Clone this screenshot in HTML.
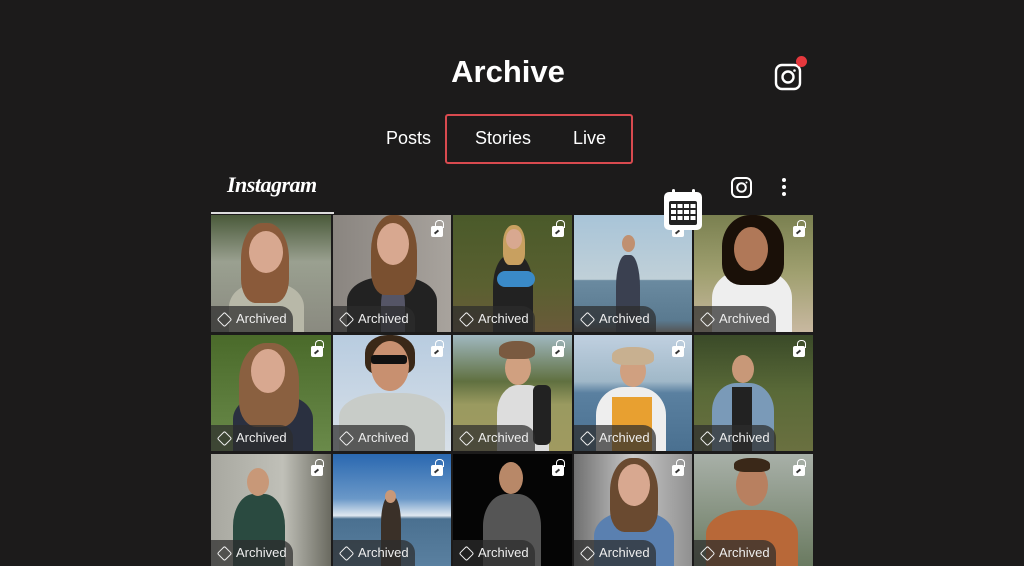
<!DOCTYPE html>
<html><head><meta charset="utf-8"><style>
*{margin:0;padding:0;box-sizing:border-box}
body{width:1024px;height:559px;background:#1c1b1b;overflow:hidden;position:relative;font-family:"Liberation Sans",sans-serif;color:#fff}
.abs{position:absolute}
.cell{position:absolute;overflow:hidden}
.head{position:absolute;border-radius:50%}
.hair{position:absolute;border-radius:45% 45% 30% 30%}
.body{position:absolute;border-radius:40% 40% 0 0}
.pill{position:absolute;left:0;bottom:0;height:26px;width:82px;background:rgba(45,45,45,.72);border-radius:0 13px 0 0;font-size:13px;line-height:26px;padding-left:25px;color:#eee}
.pill:before{content:"";position:absolute;left:8px;top:8px;width:9px;height:9px;border:1.6px solid #eee;transform:rotate(45deg);border-radius:2px}
.lock{position:absolute;right:8px;top:11px;width:12px;height:11px;background:#fff;border-radius:2px}
.lock:before{content:"";position:absolute;left:4px;top:-6px;width:7px;height:7px;border:1.6px solid #fff;border-bottom:none;border-radius:4px 4px 0 0}
.lock:after{content:"";position:absolute;left:3px;top:5px;width:5px;height:2px;background:#333;transform:rotate(-40deg)}
</style></head><body>
<div class="abs" style="left:0;width:1016px;top:54px;text-align:center;font-size:31px;font-weight:bold">Archive</div>
<svg class="abs" style="left:774px;top:62px" width="30" height="30" viewBox="0 0 30 30"><rect x="2" y="3" width="24" height="24" rx="6" fill="none" stroke="#fff" stroke-width="2.4"/><circle cx="14" cy="15" r="5.5" fill="none" stroke="#fff" stroke-width="2.4"/><circle cx="20.5" cy="8.5" r="1.3" fill="#fff"/></svg>
<div class="abs" style="left:796px;top:56px;width:11px;height:11px;border-radius:50%;background:#e5383d"></div>
<div class="abs" style="left:386px;top:128px;font-size:18px">Posts</div>
<div class="abs" style="left:475px;top:128px;font-size:18px">Stories</div>
<div class="abs" style="left:573px;top:128px;font-size:18px">Live</div>
<div class="abs" style="left:445px;top:114px;width:188px;height:50px;border:2px solid #d94a4f;border-radius:3px"></div>
<div class="abs" style="left:227px;top:172px;font-family:'Liberation Serif',serif;font-style:italic;font-weight:bold;font-size:22px;letter-spacing:-0.5px">Instagram</div>
<div class="abs" style="left:211px;top:212px;width:123px;height:2px;background:#ddd"></div>
<svg class="abs" style="left:730px;top:176px" width="24" height="24" viewBox="0 0 24 24"><rect x="2" y="2" width="19" height="19" rx="5" fill="none" stroke="#fff" stroke-width="2"/><circle cx="11.5" cy="11.5" r="4.3" fill="none" stroke="#fff" stroke-width="2"/><circle cx="16.5" cy="6.5" r="1" fill="#fff"/></svg>
<div class="abs" style="left:782px;top:178px;width:4px;height:4px;border-radius:50%;background:#fff;box-shadow:0 7px 0 #fff,0 14px 0 #fff"></div>

<div class="cell" style="left:211px;top:215px;width:120px;height:117px;background:linear-gradient(#4a5a3a,#9aa090 40%,#8a8a80)"><div class="body" style="left:18px;top:68px;width:75px;height:60px;background:#b8b8a8"></div><div class="hair" style="left:30px;top:8px;width:48px;height:80px;background:#8a5a3a"></div><div class="head" style="left:38px;top:16px;width:34px;height:42px;background:#d8a890"></div><div class="pill">Archived</div></div>
<div class="cell" style="left:333px;top:215px;width:118px;height:117px;background:linear-gradient(90deg,#8a8580,#a8a39d)"><div class="body" style="left:14px;top:62px;width:90px;height:60px;background:#222"></div><div class="body" style="left:48px;top:66px;width:24px;height:60px;background:#556"></div><div class="hair" style="left:38px;top:0;width:46px;height:80px;background:#7a5030"></div><div class="head" style="left:44px;top:8px;width:32px;height:42px;background:#d8a890"></div><div class="lock"></div><div class="pill">Archived</div></div>
<div class="cell" style="left:453px;top:215px;width:119px;height:117px;background:linear-gradient(#4a5a2a,#5a6030 60%,#6a5a3a)"><div class="body" style="left:40px;top:40px;width:40px;height:80px;background:#222"></div><div class="abs" style="left:44px;top:56px;width:38px;height:16px;border-radius:8px;background:#3a8ac8"></div><div class="hair" style="left:50px;top:10px;width:22px;height:40px;background:#c8a060"></div><div class="head" style="left:53px;top:14px;width:16px;height:20px;background:#d8a890"></div><div class="lock"></div><div class="pill">Archived</div></div>
<div class="cell" style="left:574px;top:215px;width:118px;height:117px;background:linear-gradient(#a8c4d8,#c0d0d8 55%,#6a8aa0 56%,#5a7a90 90%,#555)"><div class="body" style="left:42px;top:40px;width:24px;height:80px;background:#3a4050"></div><div class="head" style="left:48px;top:20px;width:13px;height:17px;background:#c09070"></div><div class="lock"></div><div class="pill">Archived</div></div>
<div class="cell" style="left:694px;top:215px;width:119px;height:117px;background:linear-gradient(#7a8050,#a0a070 50%,#c8b8a0)"><div class="body" style="left:18px;top:55px;width:80px;height:70px;background:#eee"></div><div class="hair" style="left:28px;top:0;width:62px;height:70px;background:#1a1008"></div><div class="head" style="left:40px;top:12px;width:34px;height:44px;background:#b07858"></div><div class="lock"></div><div class="pill">Archived</div></div>

<div class="cell" style="left:211px;top:335px;width:120px;height:116px;background:linear-gradient(#4a6a2a,#6a8a4a)"><div class="body" style="left:22px;top:60px;width:80px;height:60px;background:#2a3040"></div><div class="hair" style="left:28px;top:8px;width:60px;height:84px;background:#8a6040"></div><div class="head" style="left:40px;top:14px;width:34px;height:44px;background:#d8a890"></div><div class="lock"></div><div class="pill">Archived</div></div>
<div class="cell" style="left:333px;top:335px;width:118px;height:116px;background:linear-gradient(#b8cce0,#d8e0e8)"><div class="body" style="left:6px;top:58px;width:106px;height:60px;background:#c8ccc8"></div><div class="hair" style="left:32px;top:0;width:50px;height:40px;background:#3a2818"></div><div class="head" style="left:38px;top:6px;width:38px;height:50px;background:#c89070"></div><div class="abs" style="left:38px;top:20px;width:36px;height:9px;background:#111;border-radius:3px"></div><div class="lock"></div><div class="pill">Archived</div></div>
<div class="cell" style="left:453px;top:335px;width:119px;height:116px;background:linear-gradient(#a0b8c0,#607040 40%,#9a9a60 60%,#a09a60)"><div class="body" style="left:44px;top:50px;width:52px;height:70px;background:#ddd"></div><div class="abs" style="left:80px;top:50px;width:18px;height:60px;background:#222;border-radius:6px"></div><div class="head" style="left:52px;top:16px;width:26px;height:34px;background:#d0a080"></div><div class="hair" style="left:46px;top:6px;width:36px;height:18px;background:#7a5a40"></div><div class="lock"></div><div class="pill">Archived</div></div>
<div class="cell" style="left:574px;top:335px;width:118px;height:116px;background:linear-gradient(#c0d0e0,#a0b8c8 40%,#5a80a0 50%,#4a7090)"><div class="body" style="left:22px;top:52px;width:70px;height:70px;background:#eee"></div><div class="abs" style="left:38px;top:62px;width:40px;height:60px;background:#e8a030"></div><div class="head" style="left:46px;top:20px;width:26px;height:32px;background:#d0a080"></div><div class="hair" style="left:38px;top:12px;width:42px;height:18px;background:#c8b090"></div><div class="lock"></div><div class="pill">Archived</div></div>
<div class="cell" style="left:694px;top:335px;width:119px;height:116px;background:linear-gradient(#3a4a28,#5a6a38 50%,#6a7040)"><div class="body" style="left:18px;top:48px;width:62px;height:70px;background:#7a9ab8"></div><div class="abs" style="left:38px;top:52px;width:20px;height:66px;background:#222"></div><div class="head" style="left:38px;top:20px;width:22px;height:28px;background:#c89878"></div><div class="lock"></div><div class="pill">Archived</div></div>

<div class="cell" style="left:211px;top:454px;width:120px;height:112px;background:linear-gradient(90deg,#a8a8a0,#c0c0b8 60%,#6a6a60)"><div class="body" style="left:22px;top:40px;width:52px;height:80px;background:#2a4a40"></div><div class="head" style="left:36px;top:14px;width:22px;height:28px;background:#c89878"></div><div class="lock"></div><div class="pill">Archived</div></div>
<div class="cell" style="left:333px;top:454px;width:118px;height:112px;background:linear-gradient(#2a68b0,#6a98c8 40%,#e0e8f0 55%,#4a7090 58%,#5a80a0)"><div class="body" style="left:48px;top:42px;width:20px;height:70px;background:#3a3028"></div><div class="head" style="left:52px;top:36px;width:11px;height:13px;background:#c89878"></div><div class="lock"></div><div class="pill">Archived</div></div>
<div class="cell" style="left:453px;top:454px;width:119px;height:112px;background:#050505"><div class="body" style="left:30px;top:40px;width:58px;height:80px;background:#555"></div><div class="head" style="left:46px;top:8px;width:24px;height:32px;background:#b88868"></div><div class="lock"></div><div class="pill">Archived</div></div>
<div class="cell" style="left:574px;top:454px;width:118px;height:112px;background:linear-gradient(90deg,#707070,#c8c8c8 50%,#909090)"><div class="body" style="left:20px;top:58px;width:80px;height:60px;background:#5a80b0"></div><div class="hair" style="left:36px;top:4px;width:48px;height:74px;background:#6a4a30"></div><div class="head" style="left:44px;top:10px;width:32px;height:42px;background:#d8a890"></div><div class="lock"></div><div class="pill">Archived</div></div>
<div class="cell" style="left:694px;top:454px;width:119px;height:112px;background:linear-gradient(#a8b0a8,#6a7a60)"><div class="body" style="left:12px;top:56px;width:92px;height:60px;background:#b86838"></div><div class="head" style="left:42px;top:10px;width:32px;height:42px;background:#b88060"></div><div class="hair" style="left:40px;top:4px;width:36px;height:14px;background:#3a2818"></div><div class="lock"></div><div class="pill">Archived</div></div>

<div class="abs" style="left:664px;top:192px;width:38px;height:38px;background:#fff;border-radius:5px"></div>
<div class="abs" style="left:672px;top:189px;width:3px;height:7px;background:#fff;border-radius:2px;box-shadow:20px 0 0 #fff"></div>
<svg class="abs" style="left:669px;top:201px" width="28" height="24" viewBox="0 0 28 24"><rect x="0" y="0" width="28" height="24" rx="2" fill="#222"/><g fill="#fff"><rect x="2" y="3" width="5" height="4"/><rect x="8.5" y="3" width="5" height="4"/><rect x="15" y="3" width="5" height="4"/><rect x="21.5" y="3" width="5" height="4"/><rect x="2" y="9" width="5" height="4"/><rect x="8.5" y="9" width="5" height="4"/><rect x="15" y="9" width="5" height="4"/><rect x="21.5" y="9" width="5" height="4"/><rect x="2" y="15" width="5" height="4"/><rect x="8.5" y="15" width="5" height="4"/><rect x="15" y="15" width="5" height="4"/><rect x="21.5" y="15" width="5" height="4"/></g></svg>
</body></html>
